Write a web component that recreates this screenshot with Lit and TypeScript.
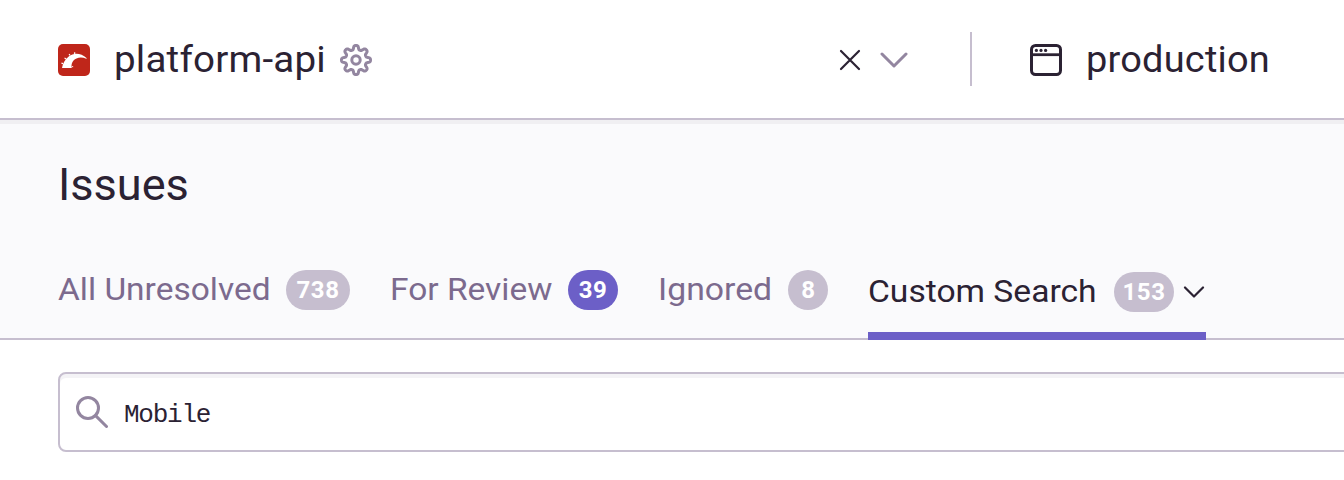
import { LitElement, html, css } from "lit";
import { customElement } from "lit/decorators.js";

/** Closed outline of an eight-lobed gear centred on 16,16. */
function gearPath(): string {
  const points: string[] = [];
  for (let i = 0; i < 240; i++) {
    const a = (i / 240) * Math.PI * 2;
    const wave = Math.tanh(1.7 * Math.cos(a * 8)) / Math.tanh(1.7);
    const r = 12.5 + 2 * wave;
    points.push(`${(16 + r * Math.sin(a)).toFixed(2)} ${(16 - r * Math.cos(a)).toFixed(2)}`);
  }
  return `M${points.join("L")}Z`;
}

const railsIcon = html`<svg class="icon" width="32" height="32" viewBox="0 0 32 32">
  <rect width="32" height="32" rx="5" fill="#bf261a" />
  <path
    fill="#fff"
    d="M4 24C4.500 20 7 15.500 11 12.300C15.500 8.800 22.500 8.300 28.800 14.300L28.300 14.800C25 13.300 21.500 13 18.500 14.500C14 16.500 13 20.500 13.800 24Z"
  />
  <path
    fill="#fff"
    d="M3.600 18.500l1.700.6-.4 1.200-1.600-.5zM6.900 13.400l1.500 1.100-.8 1-1.400-1.200zM11.500 9.700l1 1.400-1 .7-.9-1.500zM16 8.200l1.400.2v1.300l-1.500.2zM14 22l1.300.4-.2.900-1.200-.2z"
  />
</svg>`;

const gearIcon = html`<svg class="icon" width="32" height="32" viewBox="0 0 32 32" fill="none" stroke="#9386a0" stroke-width="3">
  <path d=${gearPath()} stroke-linejoin="round" />
  <circle cx="16" cy="16" r="4.200" />
</svg>`;

const closeIcon = html`<svg class="icon" width="22" height="22" viewBox="0 0 22 22" fill="none" stroke="#2b2233" stroke-width="2.200" stroke-linecap="round">
  <path d="M2 2L20 20M20 2L2 20" />
</svg>`;

const chevronIcon = html`<svg class="icon" width="28" height="16" viewBox="0 0 28 16" fill="none" stroke="#9386a0" stroke-width="3" stroke-linecap="round" stroke-linejoin="round">
  <path d="M2 2L14 14L26 2" />
</svg>`;

const smallChevronIcon = html`<svg class="icon" width="22" height="12" viewBox="0 0 22 12" fill="none" stroke="#2b2233" stroke-width="2.200" stroke-linecap="round" stroke-linejoin="round">
  <path d="M2 1.500L11 10.500L20 1.500" />
</svg>`;

const windowIcon = html`<svg class="icon" width="32" height="32" viewBox="0 0 32 32" fill="none" stroke="#2b2233" stroke-width="3">
  <rect x="1.500" y="1.500" width="29" height="29" rx="4" />
  <path d="M1.500 10.700H30.500" stroke-width="2.800" />
  <g fill="#2b2233" stroke="none">
    <circle cx="6.400" cy="6.400" r="1.600" />
    <circle cx="11" cy="6.400" r="1.600" />
    <circle cx="15.600" cy="6.400" r="1.600" />
  </g>
</svg>`;

const searchIcon = html`<svg class="icon" width="32" height="32" viewBox="0 0 32 32" fill="none" stroke="#9386a0" stroke-width="3" stroke-linecap="round">
  <circle cx="12" cy="12" r="10.500" />
  <path d="M19.600 19.600L30.500 30.500" />
</svg>`;

@customElement("app-root")
export class AppRoot extends LitElement {
  static styles = css`
    :host {
      display: flex;
      flex-direction: column;
      height: 480px;
      overflow: hidden;
      background: #fff;
      color: #2b2233;
      font-family: Roboto, sans-serif;
    }
    * { box-sizing: border-box; }
    .icon { display: block; flex: none; }
    .stretch { display: block; transform-origin: 0 50%; }
    .topbar {
      flex: none;
      display: flex;
      align-items: center;
      height: 120px;
      padding: 2px 0 0 58px;
      border-bottom: 2px solid #c6becf;
      font-size: 36px;
      line-height: 44px;
      white-space: nowrap;
    }
    .project { display: flex; align-items: center; width: 780px; }
    .project-name { width: 226px; margin-left: 24px; letter-spacing: 0.2px; transform: scaleX(1.07); }
    .actions { display: flex; align-items: center; gap: 19px; width: 132px; padding-left: 1px; }
    .environment {
      display: flex;
      align-items: center;
      gap: 24px;
      height: 54px;
      margin-top: -2px;
      padding: 2px 0 0 58px;
      border-left: 2px solid #c6becf;
    }
    .env-name { letter-spacing: 0.2px; transform: scaleX(1.054); }
    .header {
      flex: none;
      display: flex;
      flex-direction: column;
      justify-content: space-between;
      height: 220px;
      padding: 39px 0 0 58px;
      background: #fafafc;
      border-top: 4px solid #f0eff2;
      border-bottom: 2px solid #c6becf;
    }
    .title { margin: 0; font-size: 44px; line-height: 44px; font-weight: 400; transform: scaleX(1.025); }
    .tabs { display: flex; align-items: flex-end; gap: 40px; margin-bottom: -2px; }
    .tab {
      display: flex;
      align-items: center;
      height: 70px;
      padding-bottom: 30px;
      color: #7c6a8e;
      font-size: 32px;
      line-height: 38px;
      white-space: nowrap;
    }
    .label { padding-bottom: 2px; }
    .all { width: 228px; transform: scaleX(1.046); }
    .review { width: 178px; transform: scaleX(1.046); }
    .ignored { width: 130px; transform: scaleX(1.055); }
    .custom { width: 246px; transform: scaleX(1.05); }
    .tab.active {
      height: 68px;
      padding: 0 1px 20px 0;
      border-bottom: 8px solid #6c5fc7;
      color: #2b2233;
    }
    .badge {
      display: flex;
      align-items: center;
      justify-content: center;
      height: 40px;
      border-radius: 20px;
      background: #c6becf;
      color: #fff;
      font-size: 24px;
      font-weight: 700;
      letter-spacing: 0.6px;
    }
    .w3 { width: 64px; }
    .w2 { width: 50px; background: #6c5fc7; }
    .w1 { width: 40px; padding-left: 1px; }
    .w4 { width: 60px; margin-right: 9px; }
    .search {
      flex: none;
      display: flex;
      align-items: center;
      height: 80px;
      margin: 32px -8px 0 58px;
      padding: 0 16px;
      gap: 16px;
      border: 2px solid #c6becf;
      border-radius: 8px;
      box-shadow: inset 0 4px 0 #f4f3f6;
      font-family: "Liberation Mono", monospace;
      font-size: 26px;
      letter-spacing: -1.25px;
    }
    .query { padding-top: 5px; }
  `;

  render() {
    return html`
      <header class="topbar">
        <div class="project">
          ${railsIcon}
          <span class="stretch project-name">platform-api</span>
          ${gearIcon}
        </div>
        <div class="actions">${closeIcon}${chevronIcon}</div>
        <div class="environment">${windowIcon}<span class="stretch env-name">production</span></div>
      </header>
      <section class="header">
        <h1 class="stretch title">Issues</h1>
        <nav class="tabs">
          <div class="tab"><span class="stretch label all">All Unresolved</span><span class="badge w3">738</span></div>
          <div class="tab"><span class="stretch label review">For Review</span><span class="badge w2">39</span></div>
          <div class="tab"><span class="stretch label ignored">Ignored</span><span class="badge w1">8</span></div>
          <div class="tab active">
            <span class="stretch label custom">Custom Search</span><span class="badge w4">153</span>${smallChevronIcon}
          </div>
        </nav>
      </section>
      <div class="search">${searchIcon}<span class="query">Mobile</span></div>
    `;
  }
}
